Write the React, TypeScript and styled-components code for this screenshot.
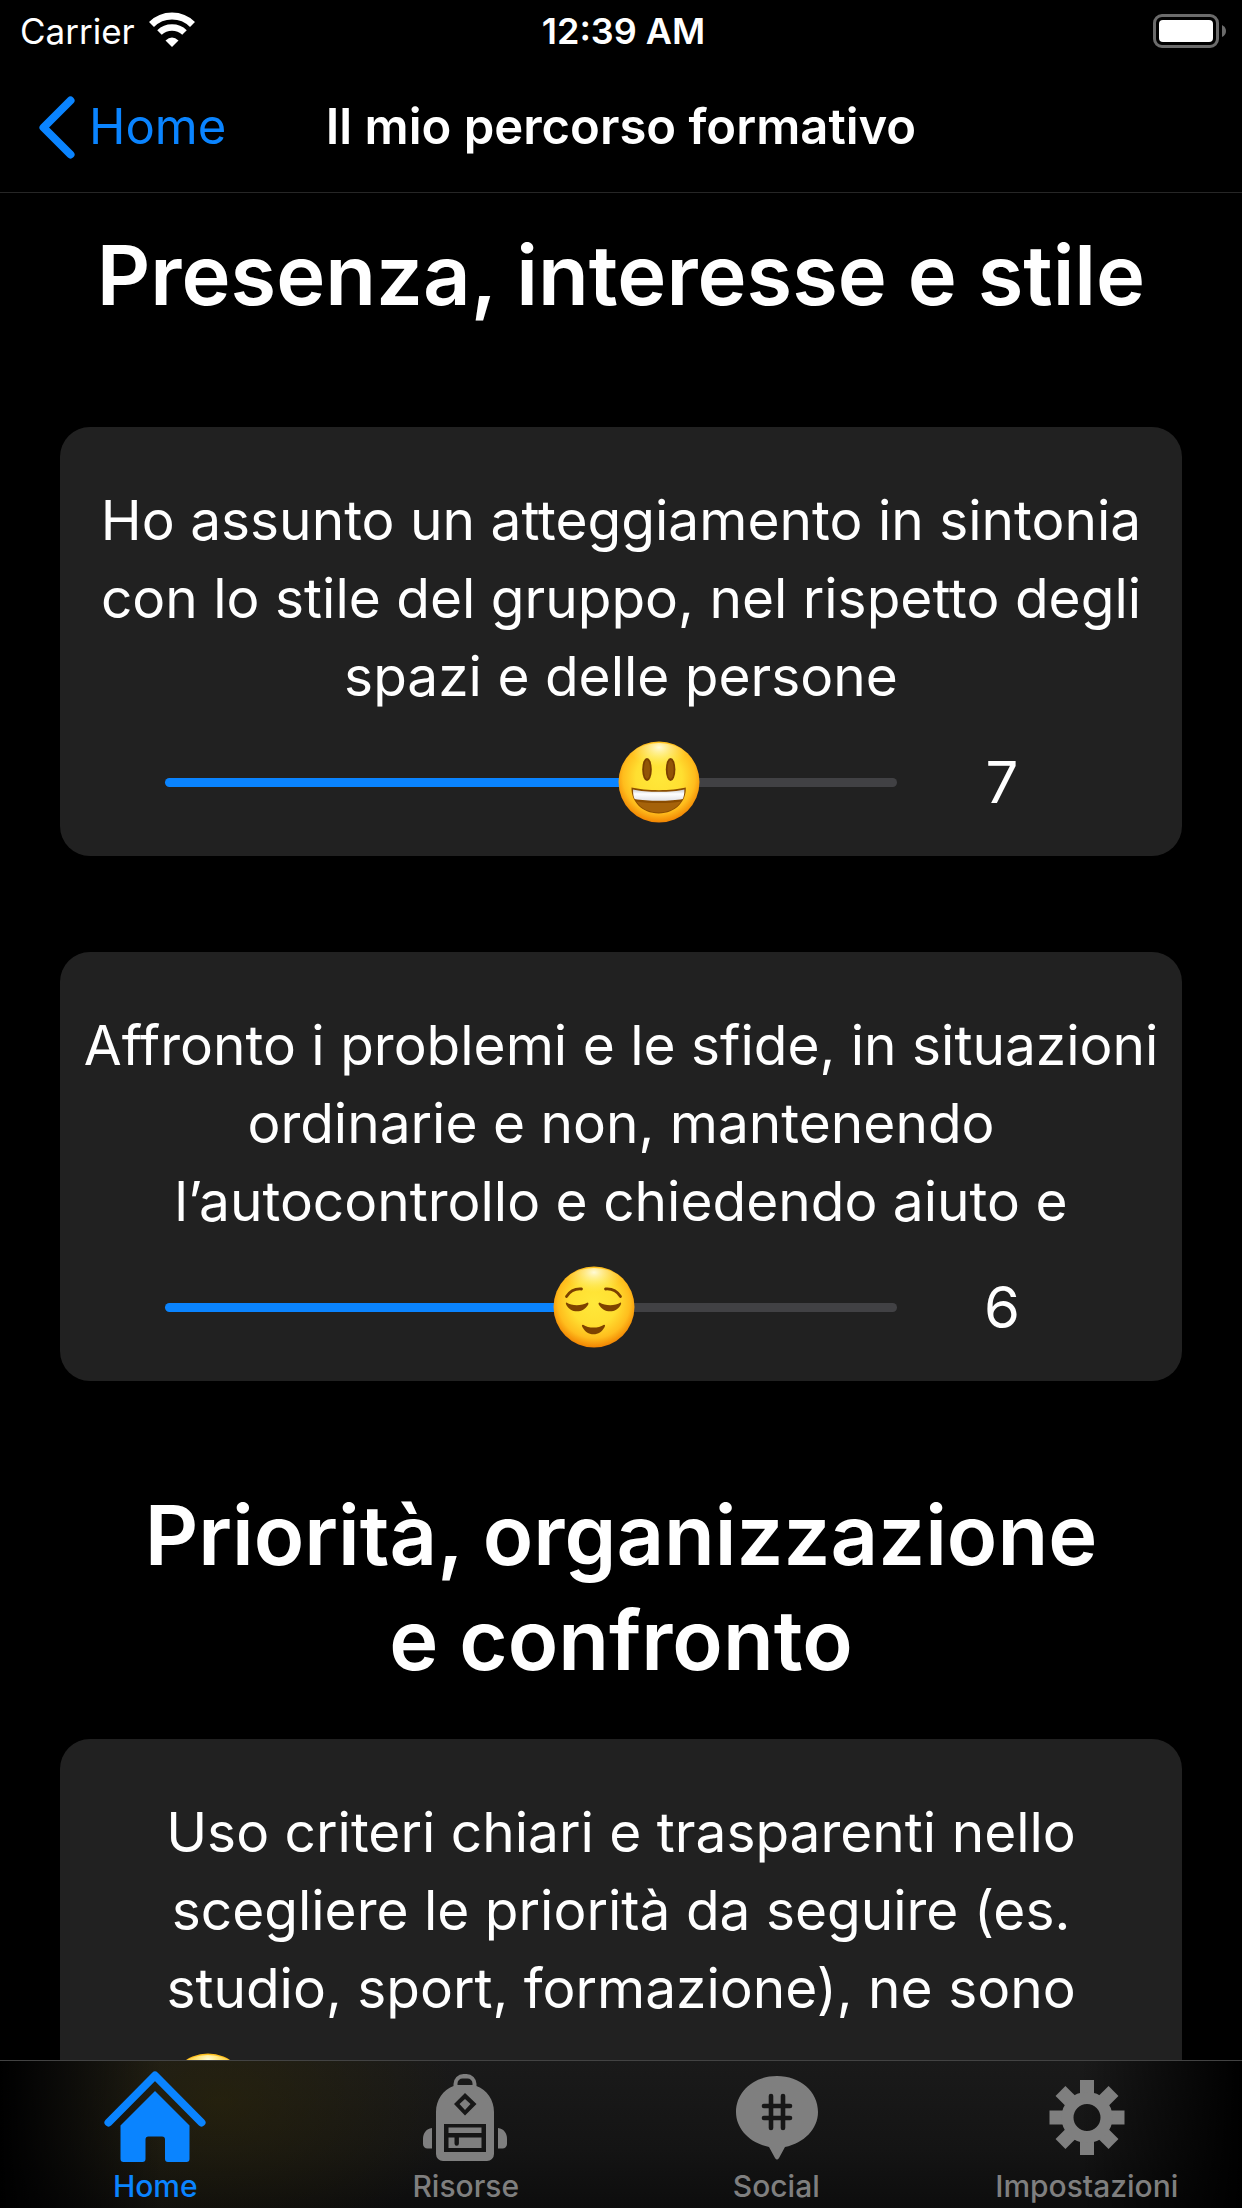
import React, { useId, useState } from 'react';
import styled, { createGlobalStyle } from 'styled-components';

const colors = {
  accent: '#0a84ff',
  card: '#212121',
  track: '#414144',
  muted: '#7f7f7f',
};

const GlobalStyle = createGlobalStyle`
  *, *::before, *::after { box-sizing: border-box; }
  body {
    margin: 0;
    background: #000;
    color: #fff;
    font-family: Inter, "Liberation Sans", sans-serif;
  }
`;

const Screen = styled.div`
  display: flex;
  flex-direction: column;
  height: 100vh;
  background: #000;
`;

const Header = styled.header`
  flex: none;
  border-bottom: 1px solid #262626;
`;

const StatusBar = styled.div`
  display: grid;
  grid-template-columns: 1fr auto 1fr;
  align-items: center;
  height: 60px;
  padding: 2px 15px 0 20px;
  font-size: 35px;
  line-height: 44px;
`;

const Carrier = styled.div`
  display: flex;
  align-items: center;
  gap: 14px;
`;

const Clock = styled.time`
  font-size: 36px;
  font-weight: 600;
`;

const BatteryIcon = styled.svg`
  justify-self: end;
`;

const NavBar = styled.nav`
  display: grid;
  grid-template-columns: 1fr auto 1fr;
  align-items: center;
  height: 132px;
  padding: 2px 38px 0;
`;

const BackLink = styled.a`
  display: flex;
  align-items: center;
  gap: 14px;
  color: ${colors.accent};
  font-size: 49px;
  line-height: 60px;
  text-decoration: none;
`;

const Title = styled.h1`
  margin: 0;
  font-size: 49px;
  font-weight: 600;
  line-height: 60px;
`;

const Content = styled.main`
  flex: 1;
  min-height: 0;
  overflow-y: auto;
  scrollbar-width: none;
`;

const Section = styled.section`
  display: flex;
  flex-direction: column;
  gap: 96px;
  padding: 0 60px 96px;
`;

const SectionTitle = styled.h2<{ $top: number; $bottom: number }>`
  margin: 0 0 ${(p) => p.$bottom - 96}px;
  padding-top: ${(p) => p.$top}px;
  font-size: 83px;
  font-weight: 600;
  line-height: 105px;
  text-align: center;
  white-space: pre-line;
`;

const Card = styled.article`
  padding: 54px 0 29px;
  border-radius: 30px;
  background: ${colors.card};
`;

const Question = styled.label`
  display: block;
  font-size: 55px;
  line-height: 78px;
  text-align: center;
  white-space: pre-line;
`;

const Answer = styled.div`
  display: flex;
  align-items: center;
  gap: 30px;
  margin-top: 22px;
  padding: 0 105px;
`;

const SliderBox = styled.div`
  position: relative;
  flex: 1;
  height: 90px;
`;

const Range = styled.input`
  display: block;
  width: 100%;
  height: 90px;
  margin: 0;
  appearance: none;
  background: transparent;
  cursor: pointer;

  &::-webkit-slider-runnable-track {
    height: 9px;
    border-radius: 5px;
    background: linear-gradient(
      to right,
      ${colors.accent} var(--filled),
      ${colors.track} var(--filled)
    );
  }

  &::-webkit-slider-thumb {
    appearance: none;
    width: 86px;
    height: 86px;
    margin-top: -38px;
    background: transparent;
  }
`;

const Thumb = styled.svg`
  position: absolute;
  top: 4px;
  width: 82px;
  height: 82px;
  transform: translateX(-50%);
  pointer-events: none;
`;

const Score = styled.output`
  width: 150px;
  font-size: 58px;
  line-height: 78px;
  text-align: center;
`;

const TabBar = styled.nav`
  display: grid;
  grid-template-columns: repeat(4, 1fr);
  flex: none;
  height: 148px;
  border-top: 1px solid #434343;
  background:
    linear-gradient(to right, #000, transparent 13%, transparent 87%, #000),
    radial-gradient(ellipse 240px 150px at 220px 40px, rgba(56, 46, 0, 0.4), transparent),
    linear-gradient(#1a1a1a, #141414 60%, #0d0d0d);
`;

const Tab = styled.a<{ $active?: boolean }>`
  display: flex;
  flex-direction: column;
  align-items: center;
  padding-top: 6px;
  color: ${(p) => (p.$active ? colors.accent : colors.muted)};
  font-size: 30px;
  font-weight: 500;
  line-height: 36px;
  text-decoration: none;

  svg {
    display: block;
    width: 102px;
    height: 100px;
    margin-bottom: 1px;
  }
`;

type Mood = 'happy' | 'relieved' | 'sad';

function moodFor(score: number): Mood {
  if (score >= 7) return 'happy';
  if (score >= 4) return 'relieved';
  return 'sad';
}

function Emoji({ mood, left }: { mood: Mood; left: string }) {
  const id = useId().replace(/:/g, '');
  const brown = '#7a3f00';
  return (
    <Thumb viewBox="0 0 82 82" style={{ left }} aria-hidden="true">
      <defs>
        <radialGradient id={`${id}face`} cx="50%" cy="44%" r="57%">
          <stop offset="0" stopColor="#ffe83a" />
          <stop offset="0.5" stopColor="#ffdf31" />
          <stop offset="0.78" stopColor="#ffbd1d" />
          <stop offset="1" stopColor="#f07f00" />
        </radialGradient>
        <radialGradient id={`${id}shine`} cx="50%" cy="10%" r="45%">
          <stop offset="0" stopColor="#fffde0" stopOpacity="0.95" />
          <stop offset="1" stopColor="#fff26a" stopOpacity="0" />
        </radialGradient>
        <linearGradient id={`${id}teeth`} x1="0" y1="0" x2="0" y2="1">
          <stop offset="0" stopColor="#c9c9cc" />
          <stop offset="0.4" stopColor="#ffffff" />
          <stop offset="1" stopColor="#e2e2e6" />
        </linearGradient>
      </defs>
      <circle cx="41" cy="41" r="40.5" fill={`url(#${id}face)`} />
      <ellipse cx="41" cy="24" rx="33" ry="22" fill={`url(#${id}shine)`} />
      {mood === 'happy' && (
        <>
          <ellipse cx="29" cy="28.5" rx="4.8" ry="11.6" fill={brown} />
          <ellipse cx="52.6" cy="28.5" rx="4.8" ry="11.6" fill={brown} />
          <ellipse cx="29" cy="28.5" rx="3" ry="9.4" fill="#925507" />
          <ellipse cx="52.6" cy="28.5" rx="3" ry="9.4" fill="#925507" />
          <path d="M13.5 46.6 C27 50 55 50 67.8 46.6 C68.4 60 58 72.5 40.7 72.5 C23.5 72.5 13 60 13.5 46.6Z" fill="#8a4c00" />
          <path d="M15 48.4 C28 51.5 54 51.5 66.4 48.4 C66.4 53 65.7 56 64.7 58 C53 60.4 29 60.4 16.7 58 C15.6 56 15 53 15 48.4Z" fill={`url(#${id}teeth)`} />
          <path d="M18.5 60.5 C31 62.5 51 62.5 63 60.5 C58.5 67.5 50.5 71.5 40.7 71.5 C31 71.5 23 67.5 18.5 60.5Z" fill="#a5620a" />
        </>
      )}
      {mood === 'relieved' && (
        <>
          <g fill="none" stroke={brown} strokeWidth="2.8" strokeLinecap="round">
            <path d="M13.5 30.5 C17 25 22.5 22.5 28.5 23" />
            <path d="M67.5 30.5 C64 25 58.5 22.5 52.5 23" />
          </g>
          <g fill="#7e4200">
            <path d="M13.5 36.5 C19 40 28.5 40 34.5 36.5 C36 36.8 35.5 38.2 34.8 39.2 C32.5 43 28.5 45.3 24 45.3 C19.5 45.3 15.5 43 13.5 39.2 C12.8 37.8 12.5 36.6 13.5 36.5Z" />
            <path d="M46.5 36.5 C52.5 40 62 40 67.5 36.5 C68.5 36.6 68.2 37.8 67.5 39.2 C65.5 43 61.5 45.3 57 45.3 C52.5 45.3 48.5 43 46.2 39.2 C45.5 38.2 45 36.8 46.5 36.5Z" />
            <path d="M30 58.7 C36 62.5 45 62.5 51 58.7 C52.5 58.8 52.2 60 51.5 61.2 C49 65.7 45.5 68.2 40.5 68.2 C35.5 68.2 32 65.7 29.5 61.2 C28.8 60 28.5 58.8 30 58.7Z" />
          </g>
        </>
      )}
      {mood === 'sad' && (
        <>
          <ellipse cx="28" cy="35" rx="4.5" ry="7" fill={brown} />
          <ellipse cx="54" cy="35" rx="4.5" ry="7" fill={brown} />
          <path d="M27 62 C33 53 49 53 55 62" fill="none" stroke={brown} strokeWidth="3.5" strokeLinecap="round" />
        </>
      )}
    </Thumb>
  );
}

const THUMB = 86;

function QuestionCard({ text, initial }: { text: string; initial: number }) {
  const id = useId();
  const [value, setValue] = useState(initial);
  const ratio = value / 10;
  const center = `calc(${ratio * 100}% + ${THUMB / 2 - ratio * THUMB}px)`;
  const score = Math.round(value);
  return (
    <Card>
      <Question htmlFor={id}>{text}</Question>
      <Answer>
        <SliderBox>
          <Range
            id={id}
            type="range"
            min={0}
            max={10}
            step="any"
            value={value}
            onChange={(e) => setValue(Number(e.target.value))}
            style={{ '--filled': center } as React.CSSProperties}
          />
          <Emoji mood={moodFor(score)} left={center} />
        </SliderBox>
        {/* A question stays unrated until its slider leaves the start. */}
        <Score htmlFor={id}>{score > 0 ? score : null}</Score>
      </Answer>
    </Card>
  );
}

function HomeIcon() {
  return (
    <svg viewBox="0 0 102 100" fill="currentColor" aria-hidden="true">
      <path d="M4.5 55.5 L51 8.5 L97.5 55.5" fill="none" stroke="currentColor" strokeWidth="8" strokeLinecap="round" strokeLinejoin="round" />
      <path d="M51 24 L85.5 58.5 V92 a3 3 0 0 1 -3 3 H64 a3 3 0 0 1 -3 -3 V72.5 a3 3 0 0 0 -3 -3 H44.5 a3 3 0 0 0 -3 3 V92 a3 3 0 0 1 -3 3 H19.5 a3 3 0 0 1 -3 -3 V58.5Z" />
    </svg>
  );
}

function BackpackIcon() {
  return (
    <svg viewBox="1 0 102 100" fill="currentColor" aria-hidden="true">
      <path
        fillRule="evenodd"
        d="M39.5 19 V17 a10 10 0 0 1 10 -10 H52.5 a10 10 0 0 1 10 10 V19 C73 23 80 33 80 45 V87 a7 7 0 0 1 -7 7 H29 a7 7 0 0 1 -7 -7 V45 C22 33 29 23 39.5 19Z M43.5 18 H58.5 V16.5 a5 5 0 0 0 -5 -5 H48.5 a5 5 0 0 0 -5 5Z M51 26 L40 37 L51 48.5 L62.5 37Z M51 32 L56.5 37 L51 43 L45.5 37Z M30 57 V85 H72 V57Z M34.5 60.5 H67.5 V66 H34.5Z M34.5 70.5 H40.5 V76.5 a2.2 2.2 0 0 0 4.4 0 V70.5 H67.5 V81 H34.5Z"
      />
      <path d="M18 61 V81.5 H13.5 a4.5 4.5 0 0 1 -4.5 -4.5 V72 C9 66 12 62 18 61Z M84 61 V81.5 H88.5 a4.5 4.5 0 0 0 4.5 -4.5 V72 C93 66 90 62 84 61Z" />
    </svg>
  );
}

function SocialIcon() {
  return (
    <svg viewBox="-1 0 102 100" fill="currentColor" aria-hidden="true">
      <path d="M51 9 C74 9 92 24.5 92 45 C92 62 78 76 59 80 L53 91 Q51 94 49 91 L43 80 C24 76 10 62 10 45 C10 24.5 28 9 51 9Z" />
      <g stroke="#171717" strokeWidth="4.6" strokeLinecap="round">
        <path d="M45 29 V61" />
        <path d="M57 29 V61" />
        <path d="M38 39 H64" />
        <path d="M38 51 H64" />
      </g>
    </svg>
  );
}

function GearIcon() {
  const teeth = [0, 45, 90, 135, 180, 225, 270, 315];
  return (
    <svg viewBox="0 0 102 100" fill="currentColor" aria-hidden="true">
      {teeth.map((angle) => (
        <rect key={angle} x="44" y="13" width="14" height="16" transform={`rotate(${angle} 51 50.5)`} />
      ))}
      <circle cx="51" cy="50.5" r="19.5" fill="none" stroke="currentColor" strokeWidth="12" />
    </svg>
  );
}

export default function App() {
  return (
    <>
      <GlobalStyle />
      <Screen>
        <Header>
          <StatusBar>
            <Carrier>
              Carrier
              <svg width="46" height="40" viewBox="0 0 46 40" fill="none" aria-label="Wi-Fi">
                <path d="M2.5 13.5 A29 29 0 0 1 43.5 13.5" stroke="#fff" strokeWidth="7" />
                <path d="M10.5 21.5 A18 18 0 0 1 35.5 21.5" stroke="#fff" strokeWidth="6.5" />
                <path d="M23 36 L16.5 29.5 Q23 23.5 29.5 29.5Z" fill="#fff" />
              </svg>
            </Carrier>
            <Clock>12:39 AM</Clock>
            <BatteryIcon width="74" height="34" viewBox="0 0 74 34" aria-label="Batteria">
              <rect x="1.5" y="1.5" width="63" height="31" rx="7.5" fill="none" stroke="#6b6b6b" strokeWidth="3" />
              <rect x="6" y="6" width="54" height="22" rx="4" fill="#fff" />
              <path d="M69 11 Q73 13 73 17 Q73 21 69 23Z" fill="#6b6b6b" />
            </BatteryIcon>
          </StatusBar>
          <NavBar aria-label="Navigazione">
            <BackLink href="#home">
              <svg width="37" height="63" viewBox="0 0 37 63" fill="none" stroke="currentColor" strokeWidth="8" strokeLinecap="round" strokeLinejoin="round" aria-hidden="true">
                <path d="M32.5 4.5 L5.5 31.5 L32.5 58.5" />
              </svg>
              Home
            </BackLink>
            <Title>Il mio percorso formativo</Title>
          </NavBar>
        </Header>
        <Content>
          <Section>
            <SectionTitle $top={30} $bottom={99}>Presenza, interesse e stile</SectionTitle>
            <QuestionCard
              initial={6.98}
              text={'Ho assunto un atteggiamento in sintonia\ncon lo stile del gruppo, nel rispetto degli\nspazi e delle persone'}
            />
            <QuestionCard
              initial={5.97}
              text={'Affronto i problemi e le sfide, in situazioni\nordinarie e non, mantenendo\nl’autocontrollo e chiedendo aiuto e'}
            />
          </Section>
          <Section>
            <SectionTitle $top={6} $bottom={46}>{'Priorità, organizzazione\ne confronto'}</SectionTitle>
            <QuestionCard
              initial={0}
              text={'Uso criteri chiari e trasparenti nello\nscegliere le priorità da seguire (es.\nstudio, sport, formazione), ne sono'}
            />
          </Section>
        </Content>
        <TabBar aria-label="Sezioni">
          <Tab href="#home" $active aria-current="page">
            <HomeIcon />
            Home
          </Tab>
          <Tab href="#risorse">
            <BackpackIcon />
            Risorse
          </Tab>
          <Tab href="#social">
            <SocialIcon />
            Social
          </Tab>
          <Tab href="#impostazioni">
            <GearIcon />
            Impostazioni
          </Tab>
        </TabBar>
      </Screen>
    </>
  );
}
